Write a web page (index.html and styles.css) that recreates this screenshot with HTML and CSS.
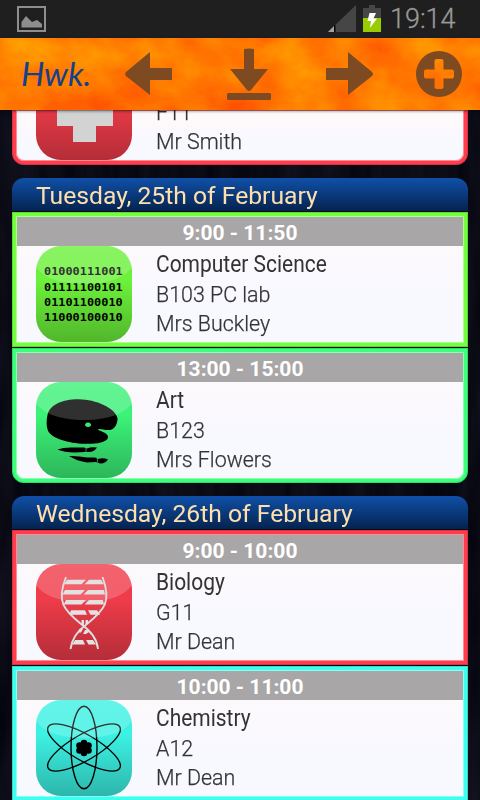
FILE: index.html
```
<!DOCTYPE html>
<html lang="en">
<head>
<meta charset="utf-8">
<title>Hwk.</title>
<link rel="stylesheet" href="styles.css">
</head>
<body>
<svg class="defs" aria-hidden="true">
  <defs>
    <linearGradient id="shade" x1="0" y1="0" x2="0" y2="1"><stop offset="0" stop-color="#fff" stop-opacity=".02"/><stop offset=".35" stop-color="#000" stop-opacity="0"/><stop offset="1" stop-color="#000" stop-opacity=".25"/></linearGradient>
    <clipPath id="tile"><rect width="96" height="96" rx="25"/></clipPath>
    <path id="glare" d="M0 0H96V20C91 31 72 38 48 38S5 31 0 20Z" fill="#fff" fill-opacity=".19"/>
  </defs>
</svg>
<div class="screen">
  <svg class="night" width="480" height="690" aria-hidden="true">
    <filter id="streaks" x="0" y="0" width="100%" height="100%" color-interpolation-filters="sRGB"><feTurbulence type="fractalNoise" baseFrequency=".06 .009" numOctaves="3" seed="8"/><feColorMatrix values=".08 0 0 0 .002  .08 0 0 0 .003  .1 0 0 0 .035  0 0 0 0 1"/></filter>
    <rect width="480" height="690" filter="url(#streaks)"/>
  </svg>
  <div class="status">
    <svg class="picture" width="30" height="26" viewBox="0 0 30 26"><rect x="1" y="1" width="27" height="24" fill="none" stroke="#8e8e8e" stroke-width="2"/><path d="M4.500 21.500V16L9 10l6 6 5-2 5 4v3.500Z" fill="#8e8e8e"/></svg>
    <svg class="signal" width="28" height="27" viewBox="0 0 28 27"><path d="M28 0V27H0Z" fill="#464646"/><path d="M6 21V27H0Z" fill="#a2a2a2"/><path d="M6 20.500h1.500V27H6Z" fill="#050505"/></svg>
    <svg class="battery" width="18" height="27" viewBox="0 0 18 27"><path d="M6 0h6v3h6v24H0V3h6Z" fill="#464646"/><path d="M0 13h18v14H0Z" fill="#98cc00"/><path d="M6.500 8H13L10.500 13.500H14L7 23 8 16H4.500Z" fill="#fff"/></svg>
    <span class="clock">19:14</span>
  </div>
  <header class="bar">
    <svg class="lava" width="480" height="72" aria-hidden="true">
      <filter id="mottle" x="0" y="0" width="100%" height="100%" color-interpolation-filters="sRGB"><feTurbulence type="fractalNoise" baseFrequency=".018 .024" numOctaves="5" seed="5"/><feColorMatrix values="0 0 0 0 1  .38 0 0 0 .285  0 0 0 0 .005  0 0 0 0 1"/></filter>
      <rect width="480" height="72" filter="url(#mottle)"/>
    </svg>
    <span class="logo">Hwk.</span>
    <svg class="act prev" width="48" height="44" viewBox="0 0 48 44"><path d="M25 0V16H47V28H25V43L1 24Q-.5 22 1 20Z"/></svg>
    <svg class="act down" width="46" height="52" viewBox="0 0 46 52"><path d="M18 1q5-1 10 0V21H42L25 42q-2 2-4 0L4 21H18Z"/><rect x="1" y="45" width="44" height="7" rx="1.500"/></svg>
    <svg class="act next" width="48" height="44" viewBox="0 0 48 44"><path d="M22 0V16H0V28H22V43L46 24Q48 22 46 20Z"/></svg>
    <svg class="act add" width="46" height="46" viewBox="0 0 46 46"><path fill-rule="evenodd" d="M23 0a23 23 0 1 0 0 46a23 23 0 1 0 0-46ZM20.500 8h5q2 0 2 2v8.500h8.500q2 0 2 2v5q0 2-2 2h-8.500v8.500q0 2-2 2h-5q-2 0-2-2v-8.500h-8.500q-2 0-2-2v-5q0-2 2-2h8.500v-8.500q0-2 2-2Z"/></svg>
  </header>
  <main class="list">
    <section class="day">
      <article class="card red last cut">
        <div class="lesson">
          <svg class="tile" viewBox="0 0 96 96"><g clip-path="url(#tile)"><rect width="96" height="96" fill="#f03c4a"/><rect width="96" height="96" fill="url(#shade)"/><path d="M37 17H60V39H77V62H60V78H37V62H21V39H37Z" fill="#d3d3d3"/><use href="#glare"/></g></svg>
          <div class="info"><p>F11</p><p>Mr Smith</p></div>
        </div>
      </article>
    </section>
    <section class="day">
      <h2><span>Tuesday, 25th of February</span></h2>
      <article class="card lime">
        <div class="time">9:00 - 11:50</div>
        <div class="lesson">
          <svg class="tile" viewBox="0 0 96 96"><g clip-path="url(#tile)"><rect width="96" height="96" fill="#6cf23a"/><rect width="96" height="96" fill="url(#shade)"/><g class="bits"><text x="8" y="32">01000111001</text><text x="8" y="48.900">01111100101</text><text x="8" y="65.400">01101100010</text><text x="8" y="82">11000100010</text></g><use href="#glare"/></g></svg>
          <div class="info"><h3>Computer Science</h3><p>B103 PC lab</p><p>Mrs Buckley</p></div>
        </div>
      </article>
      <article class="card green last">
        <div class="time">13:00 - 15:00</div>
        <div class="lesson">
          <svg class="tile" viewBox="0 0 96 96"><g clip-path="url(#tile)"><rect width="96" height="96" fill="#3cf278"/><rect width="96" height="96" fill="url(#shade)"/>
            <path fill-rule="evenodd" d="M11.500 33C14 22 28 17 43 17.300C60 17.500 79 26 81.500 36C81.800 42 78.500 47.500 74 48C69 48.500 65 46.500 62 47C61.500 49 72 50 72 55C72 59 65 61.500 55 61.800C38 62.500 19 58 13 50.500C10 46 10.300 38 11.500 33ZM52 40.500a3 2.300 0 1 0 .1 0Z"/>
            <path d="M21.500 67.500Q28 65 38 65.500H48L51 66.500Q55 64.500 61 65.500Q58 70 53 70L49 70L39 70.500Q28 70.500 21.500 67.500Z"/><path d="M33 74Q41 73.500 51 75.500H59L62 77Q67 75.500 72 77.500Q69 82 64 81.500L60 80L51 80.500Q41 79 33 74Z"/><path d="M50 66v4M61.500 76.500v4" stroke="#2fc563" stroke-width=".7"/>
            <use href="#glare"/></g></svg>
          <div class="info"><h3>Art</h3><p>B123</p><p>Mrs Flowers</p></div>
        </div>
      </article>
    </section>
    <section class="day">
      <h2><span>Wednesday, 26th of February</span></h2>
      <article class="card red">
        <div class="time">9:00 - 10:00</div>
        <div class="lesson">
          <svg class="tile" viewBox="0 0 96 96"><g clip-path="url(#tile)"><rect width="96" height="96" fill="#f03c4a"/><rect width="96" height="96" fill="url(#shade)"/><use href="#glare"/>
            <g fill="none" stroke="#dedede" stroke-width="1.900"><path d="M30 13C20 38 28 46 45 60C55 67 61 74 62 85"/><path d="M66.500 13C76 38 68 46 51 60C41 67 36 74 34.500 85"/></g>
            <g fill="#e2e2e2"><path d="M31 15.700H50L45.500 20.300H28ZM53 15.700H65L68 20.300H48.500Z"/><path d="M29 26H49L44.500 30.500H26.500ZM52 26H68L69 30.500H47.500Z"/><path d="M30 36H50L45.500 40.500H27.500ZM53 36H67L68 40.500H48.500Z"/><path d="M35 46.300H49L51 50.700H33.500ZM52 46.300H61L64 50.700H54.500Z"/><path d="M45.500 56H48V61H45.500ZM49.500 56H52V60H49.500ZM43 65H47L45 68.500H43ZM49 66H53V68L50 70H47Z"/><path d="M39 76H47L49 80.500H36ZM50 76H57L60 80.500H52.500Z"/></g></g></svg>
          <div class="info"><h3>Biology</h3><p>G11</p><p>Mr Dean</p></div>
        </div>
      </article>
      <article class="card cyan">
        <div class="time">10:00 - 11:00</div>
        <div class="lesson">
          <svg class="tile" viewBox="0 0 96 96"><g clip-path="url(#tile)"><rect width="96" height="96" fill="#3cf2e4"/><rect width="96" height="96" fill="url(#shade)"/>
            <g fill="none" stroke="#000" stroke-width="1.400"><ellipse cx="48" cy="47.500" rx="13" ry="41.300"/><ellipse cx="48" cy="47.500" rx="13" ry="41.300" transform="rotate(60 48 47.500)"/><ellipse cx="48" cy="47.500" rx="13" ry="41.300" transform="rotate(-60 48 47.500)"/></g>
            <g><circle cx="48" cy="48" r="6"/><circle cx="48" cy="43" r="3.300"/><circle cx="48" cy="53" r="3.300"/><circle cx="43.500" cy="45.500" r="3.300"/><circle cx="52.500" cy="45.500" r="3.300"/><circle cx="43.500" cy="50.500" r="3.300"/><circle cx="52.500" cy="50.500" r="3.300"/></g>
            <use href="#glare"/></g></svg>
          <div class="info"><h3>Chemistry</h3><p>A12</p><p>Mr Dean</p></div>
        </div>
      </article>
    </section>
  </main>
</div>
</body>
</html>
```
FILE: styles.css
```
* { box-sizing: border-box; margin: 0; padding: 0; }
body { font-family: Roboto, "Liberation Sans", sans-serif; background: #0b0b17; }
svg { display: block; flex: none; }
.defs { position: absolute; width: 0; height: 0; }
.screen { position: relative; width: 480px; height: 800px; overflow: hidden; display: flex; flex-direction: column; }
.night { position: absolute; top: 110px; left: 0; }
.status { flex: none; height: 38px; background: #1f1f1f; display: flex; align-items: flex-start; padding: 5px 24px 0 17px; }
.picture { margin-top: 1px; }
.signal { margin-left: auto; }
.battery { margin: 0 9px 0 7px; }
.clock { width: 66px; font-size: 27px; line-height: 29px; font-weight: 300; color: #999; -webkit-text-stroke: .3px #999; white-space: nowrap; }
.bar { position: relative; z-index: 1; flex: none; height: 72px; display: flex; align-items: flex-start; padding-left: 21px; box-shadow: 0 1px 3px rgba(0,0,0,.5); }
.lava { position: absolute; top: 0; left: 0; }
.logo { position: relative; width: 104px; padding-top: 17px; font: italic 33px/36px Lato, sans-serif; color: #14418a; }
.act { position: relative; fill: #7d4a22; }
.prev { margin-top: 14px; }
.down { margin: 10px 0 0 53px; }
.next { margin: 14px 0 0 54px; }
.add { margin: 13px 0 0 42px; }
.list { position: relative; flex: 1; min-height: 0; overflow: hidden; padding: 0 12px; }
.day { margin-bottom: 13px; }
.day h2 { height: 34px; padding-left: 24px; border-radius: 12px 12px 0 0; border-bottom: 1px solid #04091c; background: linear-gradient(#1050a8, #04234f); color: #ffe0ad; font-size: 24px; line-height: 36px; font-weight: 400; white-space: nowrap; }
.day h2 span { display: inline-block; transform: scaleX(1.028); transform-origin: 0 0; }
.card { height: 135px; margin-bottom: 1px; border: 4px solid var(--c); outline: 1px solid rgba(0,0,0,.15); outline-offset: -1px; background: linear-gradient(#fffafa, #f8f8ff 65%); padding: 1px; box-shadow: inset 0 0 0 1px color-mix(in srgb, var(--c) 60%, #fff); }
.last { margin-bottom: 0; border-radius: 0 0 12px 12px; }
.cut { height: 55px; border-top: 0; display: flex; align-items: flex-end; }
.red { --c: #ff3d4c; }
.lime { --c: #72ff3d; }
.green { --c: #3dff7c; }
.cyan { --c: #3dffef; }
.time { height: 29px; background: #a8a6a6; color: #fff; font-size: 21px; line-height: 32px; font-weight: 700; text-align: center; }
.lesson { display: flex; align-items: flex-end; padding-left: 19px; gap: 24px; color: #333; }
.tile { width: 96px; height: 96px; }
.info { white-space: nowrap; padding-bottom: 4px; }
.info h3 { font-size: 24px; line-height: 32px; font-weight: 400; transform: scaleX(.873); transform-origin: 0 0; }
.info p { font-size: 22px; line-height: 29px; font-weight: 300; -webkit-text-stroke: .25px #333; transform: scaleX(.973); transform-origin: 0 0; }
.bits { font: 700 11.9px "DejaVu Sans Mono", monospace; transform: scaleY(.915); }
```
